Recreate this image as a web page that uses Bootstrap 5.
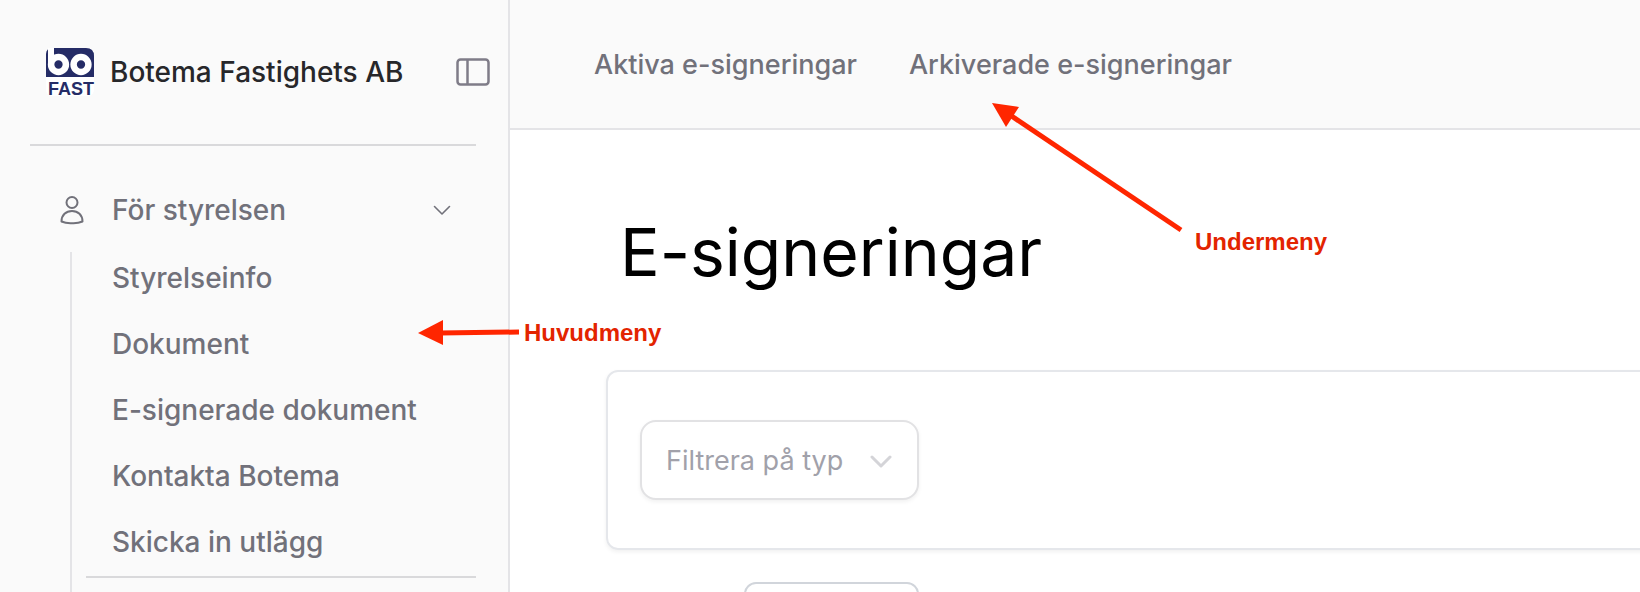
<!DOCTYPE html>
<html lang="sv">
<head>
<meta charset="utf-8">
<meta name="viewport" content="width=device-width, initial-scale=1">
<title>E-signeringar</title>
<link href="https://cdn.jsdelivr.net/npm/bootstrap@5.3.0/dist/css/bootstrap.min.css" rel="stylesheet">
<style>
  body { font-family: Inter, "Liberation Sans", sans-serif; font-size: 28px; line-height: 34px; color: #71717a; }
  a, a:hover { color: inherit; text-decoration: none; }
  svg { display: block; flex-shrink: 0; overflow: visible; }
  .side { width: 510px; background: #fafafa; border-right: 2px solid #e4e4e7; padding: 0 32px 0 30px; font-weight: 500; }
  .brand { padding: 48px 0 48px 16px; margin-right: -14px; gap: 16px; color: #27272a; }
  .rule { height: 2px; background: #d9d9db; }
  .plain { background: none; border: 0; padding: 0; color: inherit; font-weight: 500; }
  .group { margin-top: 42px; padding: 4px 26px 4px 30px; gap: 28px; height: 44px; text-align: left; }
  .sub { margin: 20px 0 0 40px; border-left: 2px solid #e4e4e7; padding-left: 14px; }
  .sub a { display: block; height: 66px; padding: 9px 0 0 26px; }
  .sub li:last-child a { height: 60px; }
  .topbar { height: 130px; background: #fafafa; border-bottom: 2px solid #e4e4e7; padding: 2px 84px 0; gap: 52px; font-size: 27px; font-weight: 500; }
  .area { padding: 74px 0 0 96px; }
  .title { font-size: 66px; line-height: 96px; font-weight: 400; color: #000; margin: 0 0 70px 14px; }
  .panel { margin-right: -24px; padding: 48px 32px; border: 2px solid #e5e7eb; border-radius: 12px; box-shadow: 0 2px 4px rgba(0,0,0,.06); }
  .filter { width: 279px; height: 80px; font-size: 27px; line-height: 34px; color: #a1a1aa; border: 2px solid #e2e2e4; border-radius: 16px; box-shadow: 0 2px 4px rgba(0,0,0,.06); padding: 2px 60px 0 24px;
    background-image: url("data:image/svg+xml,%3Csvg xmlns='http://www.w3.org/2000/svg' viewBox='0 0 22 14'%3E%3Cpath d='M2 2l9 9 9-9' fill='none' stroke='%23d4d4d8' stroke-width='3' stroke-linecap='round' stroke-linejoin='round'/%3E%3C/svg%3E"); background-size: 22px 14px; background-position: right 25px top 33px; }
  .next { width: 175px; height: 80px; margin: 32px 0 0 138px; background: #fff; border: 2px solid #d1d5db; border-radius: 12px; }
  .note { position: absolute; font: bold 24px/28px "Liberation Sans", sans-serif; color: #e32400; }
  .note svg { position: absolute; right: 100%; }
  .note-main { left: 524px; top: 319px; }
  .note-main svg { bottom: 0; }
  .note-sub { left: 1195px; top: 228px; }
  .note-sub svg { bottom: 100%; }
</style>
</head>
<body>
<div class="d-flex vh-100 overflow-hidden position-relative">
  <aside class="side flex-shrink-0">
    <div class="brand d-flex align-items-center">
      <svg width="48" height="48" viewBox="0 0 48 48" role="img" aria-label="bo Fast">
        <rect width="48" height="48" rx="6" fill="#fff"/>
        <path d="M7 0H40Q48 0 48 8V29H0V6Q0 0 7 0Z" fill="#252c66"/>
        <rect x="2" y="0" width="6" height="18" fill="#fff"/>
        <circle cx="12.500" cy="16.500" r="7.400" fill="none" stroke="#fff" stroke-width="6.500"/>
        <circle cx="35" cy="16.500" r="7.400" fill="none" stroke="#fff" stroke-width="6.500"/>
        <text x="2" y="47" font-family="Liberation Sans, sans-serif" font-weight="bold" font-size="18" fill="#252c66">FAST</text>
      </svg>
      <span>Botema Fastighets AB</span>
      <button class="plain ms-auto" type="button" aria-label="Växla sidofält">
        <svg width="34" height="28" viewBox="0 0 34 28" fill="none" stroke="#7f7c88" stroke-width="2.500"><rect x="1.500" y="1.500" width="31" height="25" rx="3"/><path d="M11.500 1.500v25"/></svg>
      </button>
    </div>
    <div class="rule"></div>
    <nav aria-label="Huvudmeny">
      <button class="plain group d-flex align-items-center w-100" type="button" aria-expanded="true">
        <svg width="24" height="28" viewBox="0 0 24 28" fill="none" stroke="#71717a" stroke-width="2"><circle cx="12" cy="6.500" r="5.500"/><path stroke-linejoin="round" d="M12 15C6 15 1.500 19 1.500 25.500Q6 27.500 12 27.200Q18 27.500 22.500 25.500C22.500 19 18 15 12 15Z"/></svg>
        <span>För styrelsen</span>
        <svg class="ms-auto" width="16" height="9" viewBox="0 0 16 9" fill="none" stroke="#71717a" stroke-width="1.600" stroke-linecap="round" stroke-linejoin="round"><path d="M.5 .5l7.500 7.500 7.500-7.500"/></svg>
      </button>
      <div class="sub">
        <ul class="list-unstyled mb-0">
          <li><a href="#">Styrelseinfo</a></li>
          <li><a href="#">Dokument</a></li>
          <li><a href="#">E-signerade dokument</a></li>
          <li><a href="#">Kontakta Botema</a></li>
          <li><a href="#">Skicka in utlägg</a></li>
        </ul>
        <div class="rule"></div>
        <div class="py-4"></div>
      </div>
    </nav>
  </aside>
  <main class="flex-grow-1 bg-white">
    <nav class="topbar d-flex align-items-center" aria-label="Undermeny">
      <a href="#">Aktiva e-signeringar</a>
      <a href="#">Arkiverade e-signeringar</a>
    </nav>
    <div class="area">
      <h1 class="title">E-signeringar</h1>
      <section class="panel">
        <select class="form-select filter" aria-label="Filtrera på typ"><option>Filtrera på typ</option></select>
      </section>
      <button class="next d-block" type="button" aria-label="Visa fler"></button>
    </div>
  </main>
  <div class="note note-main">Huvudmeny
    <svg width="106" height="28" viewBox="418 319 106 28"><path d="M440 333L519 332" stroke="#ff2600" stroke-width="5"/><path d="M418 333L443 320V345Z" fill="#ff2600"/></svg>
  </div>
  <div class="note note-sub">Undermeny
    <svg width="203" height="125" viewBox="992 103 203 125"><path d="M1010 115L1181 230" stroke="#ff2600" stroke-width="5"/><path d="M992 103L1019 107L1006 127Z" fill="#ff2600"/></svg>
  </div>
</div>
<script src="https://cdn.jsdelivr.net/npm/bootstrap@5.3.0/dist/js/bootstrap.bundle.min.js"></script>
</body>
</html>
